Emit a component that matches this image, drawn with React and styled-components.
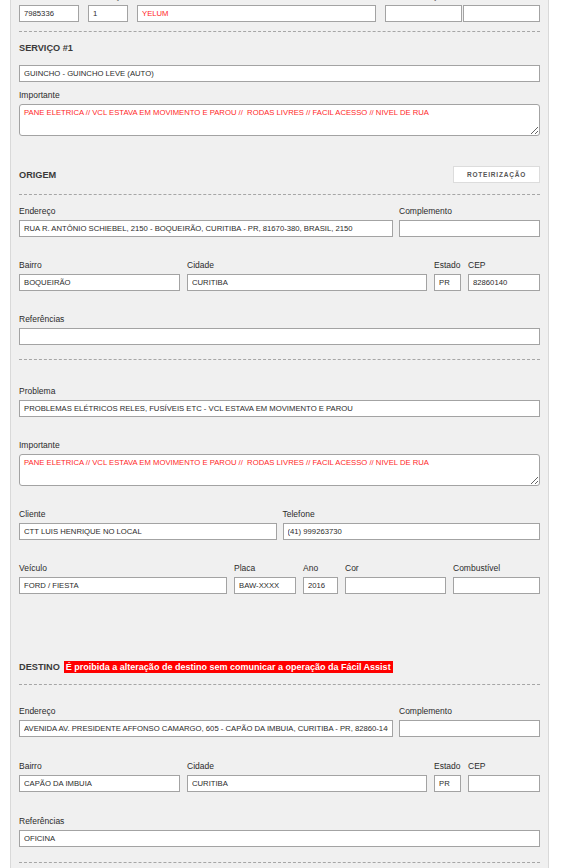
import React from 'react';
import styled, { createGlobalStyle } from 'styled-components';

const GlobalStyle = createGlobalStyle`
  html, body {
    margin: 0;
    padding: 0;
    background: #fff;
  }
  body {
    font-family: "Liberation Sans", Arial, sans-serif;
    overflow: hidden;
  }
`;

const Panel = styled.div`
  margin-left: 10px;
  width: 539px;
  box-sizing: border-box;
  min-height: 900px;
  background: #f0f0f0;
  border-left: 1px solid #d9d9d9;
  border-right: 1px solid #d9d9d9;
  padding: 0 8px;
`;

const Row = styled.div`
  display: grid;
  grid-template-columns: ${props => props.cols};
  column-gap: ${props => props.gap || 7}px;
  margin-top: ${props => props.mt || 0}px;
`;

const Field = styled.div`
  display: flex;
  flex-direction: column;
  min-width: 0;
  margin-top: ${props => props.mt || 0}px;
`;

const Label = styled.label`
  display: block;
  height: 12px;
  line-height: 12px;
  margin-bottom: 3px;
  font-size: 8.5px;
  color: #2b2b2b;
  white-space: nowrap;
`;

const Input = styled.input`
  box-sizing: border-box;
  width: 100%;
  height: 17px;
  margin: 0;
  padding: 0 4px;
  border: 1px solid #a3a3a3;
  border-radius: 0;
  background: #fff;
  font-family: "Liberation Sans", Arial, sans-serif;
  font-size: 7.7px;
  color: ${props => (props.$red ? '#ff2727' : '#2b2b2b')};
  outline: none;
`;

const InputPair = styled.div`
  display: flex;
  gap: 1px;
`;

const TextArea = styled.textarea`
  box-sizing: border-box;
  width: 100%;
  height: 32px;
  margin: 0;
  padding: 3px 4px;
  border: 1px solid #a3a3a3;
  border-radius: 3px;
  background: #fff;
  font-family: "Liberation Sans", Arial, sans-serif;
  font-size: 7.7px;
  line-height: 10px;
  color: #ff2727;
  outline: none;
  display: block;
`;

const Dashed = styled.div`
  height: 0;
  border-top: 1px dashed #a6a6a6;
  margin-top: ${props => props.mt || 0}px;
`;

const SectionHead = styled.div`
  display: flex;
  align-items: center;
  justify-content: space-between;
  height: ${props => props.h || 12}px;
  margin-top: ${props => props.mt || 0}px;
`;

const Title = styled.div`
  display: flex;
  align-items: center;
  font-size: 9.2px;
  font-weight: bold;
  color: #3a3a3a;
  line-height: 12px;
`;

const Warning = styled.span`
  margin-left: 4px;
  padding: 0 2px;
  background: #ff0000;
  color: #fff;
  font-size: 9px;
  font-weight: bold;
  line-height: 12px;
`;

const RouteButton = styled.button`
  box-sizing: border-box;
  width: 87px;
  height: 17px;
  padding: 0;
  background: #fff;
  border: 1px solid #dcdcdc;
  font-family: "Liberation Sans", Arial, sans-serif;
  font-size: 6.5px;
  font-weight: bold;
  letter-spacing: 0.8px;
  color: #555;
`;

const F = ({ label, value = '', red, mt }) => (
  <Field mt={mt}>
    <Label>{label}</Label>
    <Input readOnly value={value} $red={red} />
  </Field>
);

const Note = ({ mt }) => (
  <Field mt={mt}>
    <Label>Importante</Label>
    <TextArea
      readOnly
      defaultValue="PANE ELETRICA // VCL ESTAVA EM MOVIMENTO E PAROU //  RODAS LIVRES // FACIL ACESSO // NIVEL DE RUA"
    />
  </Field>
);

const Address = ({ endereco, bairro, cidade, estado, cep, referencias, mt, gap = 22 }) => (
  <>
    <Row cols="1fr 141px" gap={6} mt={mt}>
      <F label="Endereço" value={endereco} />
      <F label="Complemento" />
    </Row>
    <Row cols="161px 1fr 27px 72px" gap={7} mt={gap}>
      <F label="Bairro" value={bairro} />
      <F label="Cidade" value={cidade} />
      <F label="Estado" value={estado} />
      <F label="CEP" value={cep} />
    </Row>
    <F label="Referências" value={referencias} mt={gap} />
  </>
);

export default function App() {
  return (
    <>
      <GlobalStyle />
      <Panel>
        <Row cols="60px 40px 1fr 155px" gap={9} mt={-10}>
          <F label="Assistência" value="7985336" />
          <F label="Solicitação" value="1" />
          <F label="Produto" value="YELUM" red />
          <Field>
            <Label>Data Solicitação</Label>
            <InputPair>
              <Input readOnly value="" />
              <Input readOnly value="" />
            </InputPair>
          </Field>
        </Row>
        <Dashed mt={9} />

        <SectionHead mt={10}>
          <Title>SERVIÇO #1</Title>
        </SectionHead>
        <Field mt={11}>
          <Input readOnly value="GUINCHO - GUINCHO LEVE (AUTO)" />
        </Field>
        <Note mt={7} />

        <SectionHead mt={30} h={17}>
          <Title>ORIGEM</Title>
          <RouteButton type="button">ROTEIRIZAÇÃO</RouteButton>
        </SectionHead>
        <Dashed mt={11} />
        <Address
          mt={10}
          endereco="RUA R. ANTÔNIO SCHIEBEL, 2150 - BOQUEIRÃO, CURITIBA - PR, 81670-380, BRASIL, 2150"
          bairro="BOQUEIRÃO"
          cidade="CURITIBA"
          estado="PR"
          cep="82860140"
        />
        <Dashed mt={14} />

        <F
          label="Problema"
          value="PROBLEMAS ELÉTRICOS RELES, FUSÍVEIS ETC - VCL ESTAVA EM MOVIMENTO E PAROU"
          mt={25}
        />
        <Note mt={22} />
        <Row cols="1fr 1fr" gap={6} mt={22}>
          <F label="Cliente" value="CTT LUIS HENRIQUE NO LOCAL" />
          <F label="Telefone" value="(41) 999263730" />
        </Row>
        <Row cols="208px 62px 35px 1fr 87px" gap={7} mt={22}>
          <F label="Veículo" value="FORD / FIESTA" />
          <F label="Placa" value="BAW-XXXX" />
          <F label="Ano" value="2016" />
          <F label="Cor" />
          <F label="Combustível" />
        </Row>

        <SectionHead mt={67}>
          <Title>
            DESTINO
            <Warning>É proibida a alteração de destino sem comunicar a operação da Fácil Assist</Warning>
          </Title>
        </SectionHead>
        <Dashed mt={11} />
        <Address
          mt={20}
          gap={23}
          endereco="AVENIDA AV. PRESIDENTE AFFONSO CAMARGO, 605 - CAPÃO DA IMBUIA, CURITIBA - PR, 82860-140, BRASIL"
          bairro="CAPÃO DA IMBUIA"
          cidade="CURITIBA"
          estado="PR"
          referencias="OFICINA"
        />
        <Dashed mt={15} />
      </Panel>
    </>
  );
}
